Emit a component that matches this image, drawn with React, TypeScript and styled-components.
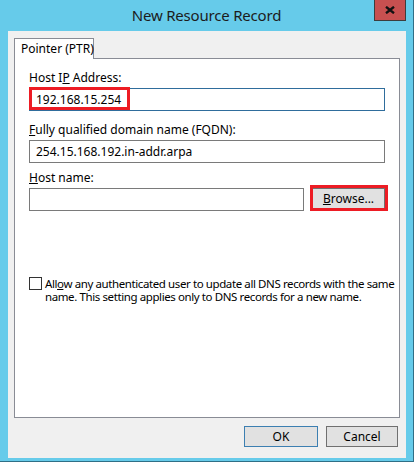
import React from "react";
import styled, { createGlobalStyle } from "styled-components";

const Global = createGlobalStyle`
  html, body { margin: 0; padding: 0; background: #66cbea; }
  * { box-sizing: border-box; }
`;

const UI = `"Noto Sans", "Open Sans", sans-serif`;

const Window = styled.div`
  width: 414px;
  height: 462px;
  background: #66cbea;
  border-right: 1px solid #2f6f86;
  border-bottom: 1px solid #2f6f86;
  display: flex;
  flex-direction: column;
  font-family: ${UI};
  font-size: 12px;
  color: #000;
`;

const TitleBar = styled.div`
  height: 31px;
  display: grid;
  grid-template-columns: 1fr auto 1fr;
  align-items: start;
`;

const Title = styled.div`
  grid-column: 2;
  font-size: 15px;
  line-height: 30px;
  color: #1c1c1c;
  letter-spacing: -0.2px;
`;

const CloseButton = styled.div`
  grid-column: 3;
  justify-self: end;
  margin-right: 7px;
  width: 32px;
  height: 21px;
  background: #c75050;
  border: 1px solid #3d3d3d;
  border-top: none;
  display: flex;
  align-items: center;
  justify-content: center;
`;

const Client = styled.div`
  flex: 1;
  margin: 0 7px 3px 8px;
  background: #f0f0f0;
  padding: 7px 6px 0 6px;
  display: flex;
  flex-direction: column;
`;

const TabStrip = styled.div`
  display: flex;
  position: relative;
  z-index: 1;
  margin-bottom: -1px;
`;

const Tab = styled.div`
  width: 80px;
  height: 21px;
  border: 1px solid #898c95;
  border-bottom: none;
  background: #fff;
  padding-left: 6px;
  line-height: 19px;
  white-space: nowrap;
`;

const Panel = styled.div`
  height: 360px;
  border: 1px solid #898c95;
  background: #fff;
  padding: 11px 14px 0 14px;
  display: flex;
  flex-direction: column;
`;

const Field = styled.div<{ $top: number }>`
  margin-top: ${(p) => p.$top}px;
  display: flex;
  flex-direction: column;
`;

const Label = styled.div`
  height: 16px;
  line-height: 16px;
  margin-bottom: 2px;
  white-space: nowrap;
`;

const InputRow = styled.div`
  display: flex;
  gap: 8px;
  position: relative;
`;

const TextBox = styled.div<{ $focused?: boolean }>`
  flex: 1;
  height: 23px;
  border: 1px solid ${(p) => (p.$focused ? "#2f6d9c" : "#7a7a7a")};
  background: #fff;
  padding-left: 6px;
  line-height: 21px;
  white-space: nowrap;
`;

const Highlight = styled.div<{ $w: number; $h: number; $l: number; $t: number }>`
  position: absolute;
  left: ${(p) => p.$l}px;
  top: ${(p) => p.$t}px;
  width: ${(p) => p.$w}px;
  height: ${(p) => p.$h}px;
  border: 3px solid #ed1c24;
  pointer-events: none;
`;

const Button = styled.div<{ $w: number; $default?: boolean }>`
  width: ${(p) => p.$w}px;
  height: 21px;
  background: #e1e1e1;
  border: 1px solid ${(p) => (p.$default ? "#3c7fb1" : "#707070")};
  display: flex;
  align-items: center;
  justify-content: center;
  white-space: nowrap;
`;

const CheckRow = styled.div`
  margin-top: 66px;
  display: flex;
  gap: 3px;
  align-items: flex-start;
`;

const CheckBox = styled.div`
  flex: none;
  width: 13px;
  height: 13px;
  border: 1px solid #333;
  background: #fff;
`;

const CheckText = styled.div`
  flex: 1;
  font-size: 11.5px;
  line-height: 13px;
  letter-spacing: -0.4px;
  white-space: nowrap;
`;

const ButtonBar = styled.div`
  margin-top: 8px;
  padding-right: 2px;
  display: flex;
  justify-content: flex-end;
  gap: 8px;
`;

export default function App() {
  return (
    <>
      <Global />
      <Window>
        <TitleBar>
          <Title>New Resource Record</Title>
          <CloseButton>
            <svg width="10" height="8" viewBox="0 0 10 8">
              <path d="M1 0.8 L9 7.2 M9 0.8 L1 7.2" stroke="#111" strokeWidth="2.4" />
            </svg>
          </CloseButton>
        </TitleBar>
        <Client>
          <TabStrip>
            <Tab>Pointer (PTR)</Tab>
          </TabStrip>
          <Panel>
            <Field $top={0}>
              <Label>
                Host I<u>P</u> Address:
              </Label>
              <InputRow>
                <TextBox $focused>192.168.15.254</TextBox>
                <Highlight $l={0} $t={-1} $w={101} $h={23} />
              </InputRow>
            </Field>
            <Field $top={11}>
              <Label>
                <u>F</u>ully qualified domain name (FQDN):
              </Label>
              <InputRow>
                <TextBox>254.15.168.192.in-addr.arpa</TextBox>
              </InputRow>
            </Field>
            <Field $top={7}>
              <Label>
                <u>H</u>ost name:
              </Label>
              <InputRow>
                <TextBox />
                <Button $w={73}>
                  <span>
                    <u>B</u>rowse...
                  </span>
                </Button>
                <Highlight $l={281} $t={-3} $w={78} $h={26} />
              </InputRow>
            </Field>
            <CheckRow>
              <CheckBox />
              <CheckText>
                All<u>o</u>w any authenticated user to update all DNS records with the same
                <br />
                name. This setting applies only to DNS records for a new name.
              </CheckText>
            </CheckRow>
          </Panel>
          <ButtonBar>
            <Button $w={74} $default>
              OK
            </Button>
            <Button $w={72}>Cancel</Button>
          </ButtonBar>
        </Client>
      </Window>
    </>
  );
}
